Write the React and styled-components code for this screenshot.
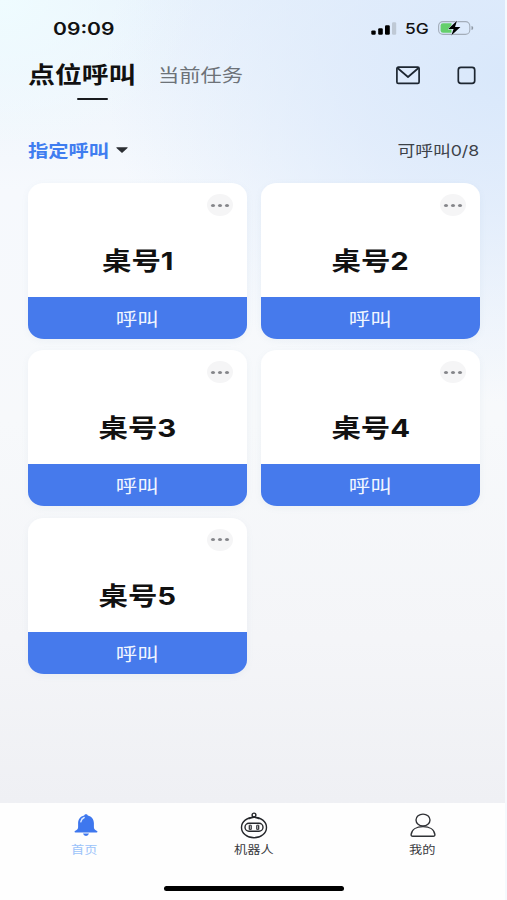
import styled, { createGlobalStyle } from "styled-components";

const GlobalStyle = createGlobalStyle`
  * {
    box-sizing: border-box;
  }

  body {
    margin: 0;
    font-family: "Inter", "Noto Sans CJK SC", sans-serif;
  }
`;

const Screen = styled.div`
  display: flex;
  flex-direction: column;
  width: 507px;
  height: 900px;
  overflow: hidden;
  border-right: 2px solid #f5f9fd;
  background:
    radial-gradient(ellipse 400px 330px at 100% 8%, #d9e8fb 0%, rgba(220, 233, 251, 0.75) 40%, rgba(232, 241, 252, 0) 100%),
    radial-gradient(ellipse 200px 150px at 0% 0%, #effcff 0%, rgba(241, 252, 255, 0) 100%),
    linear-gradient(180deg, #eaf3fc 0px, #f6f9fd 190px, #f7f9fb 420px, #f4f5f8 640px, #eff0f4 803px);
`;

/* wide lettering: every label is stretched sideways from its own edge */
const Label = styled.span`
  display: inline-block;
  white-space: nowrap;
  line-height: 1;
  font-size: ${({ $size }) => $size}px;
  font-weight: ${({ $weight }) => $weight || 400};
  color: ${({ $color }) => $color || "#111"};
  transform: scaleX(${({ $stretch }) => $stretch || 1.18});
  transform-origin: ${({ $origin }) => $origin || "center"};
`;

const StatusBar = styled.div`
  display: flex;
  align-items: center;
  justify-content: space-between;
  height: 57px;
  padding: 1px 31px 0 53px;
`;

const StatusIcons = styled.div`
  display: flex;
  align-items: center;
  margin-top: -2px;
`;

const NetworkLabel = styled.div`
  display: flex;
  width: 24px;
  margin: 1px 8px 0 8px;
`;

const Header = styled.div`
  display: flex;
  align-items: center;
  height: 36px;
  padding: 0 29px 0 28px;
`;

const Tab = styled.div`
  position: relative;
  display: flex;
  width: ${({ $width }) => $width}px;
  padding-top: ${({ $drop }) => $drop || 0}px;
`;

const TabLine = styled.div`
  position: absolute;
  left: 49px;
  top: 34px;
  width: 31px;
  height: 2px;
  border-radius: 1px;
  background: #191b1e;
`;

const HeaderIcons = styled.div`
  display: flex;
  align-items: center;
  gap: 36px;
  margin-left: auto;
`;

const FilterRow = styled.div`
  display: flex;
  align-items: center;
  height: 30px;
  margin-top: 42px;
  padding: 0 26px 0 28px;
`;

const FilterName = styled.div`
  display: flex;
  width: 88px;
  padding-top: 1px;
`;

const Count = styled.div`
  display: flex;
  margin-left: auto;
`;

const CardGrid = styled.div`
  display: grid;
  grid-template-columns: 219px 219px;
  grid-auto-rows: 156px;
  column-gap: 14px;
  row-gap: 11.4px;
  padding: 18px 0 0 28px;
`;

const Card = styled.div`
  display: flex;
  flex-direction: column;
  overflow: hidden;
  border-radius: 16px / 14px;
  background: #fff;
  box-shadow: 0 2px 7px rgba(120, 140, 170, 0.07);
`;

const CardBody = styled.div`
  position: relative;
  display: flex;
  align-items: center;
  justify-content: center;
  height: 114px;
  padding-top: 42px;
`;

const MoreButton = styled.div`
  position: absolute;
  top: 11px;
  right: 14px;
  display: flex;
  align-items: center;
  justify-content: center;
  gap: 3px;
  width: 26px;
  height: 22px;
  border-radius: 50%;
  background: #f5f5f6;
`;

const Dot = styled.span`
  width: 4px;
  height: 3px;
  border-radius: 50%;
  background: #85868a;
`;

const CallButton = styled.div`
  display: flex;
  flex: 1;
  align-items: center;
  justify-content: center;
  padding-top: 2px;
  background: #467aec;
`;

const BottomBar = styled.div`
  height: 97px;
  margin-top: auto;
  background: #fefefe;
`;

const NavList = styled.div`
  display: grid;
  grid-template-columns: 1fr 1fr 1fr;
  width: 507px;
  height: 83px;
  padding-top: 9px;
`;

const NavItem = styled.div`
  display: flex;
  flex-direction: column;
  align-items: center;
  gap: 7px;
`;

const HomeIndicator = styled.div`
  width: 180px;
  height: 5px;
  margin-left: 164px;
  border-radius: 3px;
  background: #000;
`;

const SignalIcon = () => (
  <svg width="26" height="13" viewBox="0 0 26 13">
    <rect x="0.3" y="8.4" width="4.4" height="4.4" rx="1.2" fill="#000" />
    <rect x="7.2" y="6.2" width="4.6" height="6.6" rx="1.2" fill="#000" />
    <rect x="14" y="3.2" width="4.8" height="9.6" rx="1.2" fill="#000" />
    <rect x="21" y="0.2" width="4.2" height="12.6" rx="1.2" fill="#bfc9d5" />
  </svg>
);

const BatteryIcon = () => (
  <svg width="37" height="16" viewBox="0 0 37 16">
    <rect x="1.6" y="1.6" width="31.2" height="12.8" rx="4.4" fill="none" stroke="#a3adb9" strokeWidth="1.1" />
    <path d="M6 3.2h8.500v9.600H6a2.400 2.400 0 0 1-2.400-2.400V5.600A2.400 2.400 0 0 1 6 3.200z" fill="#65cf6c" />
    <path d="M34.500 6v4c1.200-.3 1.700-1.100 1.700-2s-.5-1.700-1.700-2z" fill="#8f99a5" />
    <path d="M20 .8 11.200 9h5.400l-2.300 6.400L23.400 7H18z" fill="#000" stroke="#dce9fa" strokeWidth="1" paintOrder="stroke" />
  </svg>
);

const MailIcon = () => (
  <svg width="25" height="19" viewBox="0 0 25 19" fill="none" stroke="#1d2631" strokeWidth="1.700">
    <rect x="0.900" y="1.200" width="22.200" height="16.200" rx="1.400" />
    <path d="m1.500 2 10.500 9L22.500 2" strokeLinejoin="round" />
  </svg>
);

const SquareIcon = () => (
  <svg width="19" height="19" viewBox="0 0 19 19" fill="none">
    <rect x="1.300" y="1.400" width="16.400" height="16" rx="2.600" stroke="#1d2631" strokeWidth="1.700" />
  </svg>
);

const CaretIcon = () => (
  <svg width="12" height="7" viewBox="0 0 12 7">
    <path d="M.7.3h10.600q.7 0 .2.600L6.600 5.600q-.6.500-1.200 0L.5.900Q0 .3.700.3z" fill="#2b2e33" />
  </svg>
);

const BellIcon = () => (
  <svg width="26" height="26" viewBox="0 0 26 26">
    <path
      d="M14 2.200c.9 0 1.500.5 1.800 1.200 3.900.9 6.100 3.700 6.100 7.600v4.200c0 1.800 1.300 2.800 3.100 3.700.8.400.6 1.500-.4 1.500H3.400c-1 0-1.200-1.100-.4-1.500 1.800-.9 3.100-1.900 3.100-3.700V11c0-3.900 2.200-6.700 6.100-7.600.3-.7.900-1.200 1.800-1.200z"
      fill="#3e77ee"
    />
    <path d="M11 21.600h6q-.6 2.400-3 2.400t-3-2.400z" fill="#3e77ee" />
    <path d="M8.800 9.800q.6-3.200 3.400-4.300" fill="none" stroke="#dbe8ff" strokeWidth="1.400" strokeLinecap="round" />
  </svg>
);

const RobotIcon = () => (
  <svg width="28" height="28" viewBox="0 0 28 28" fill="none" stroke="#25272b" strokeWidth="1.400">
    <circle cx="14" cy="3" r="1.900" />
    <path d="M8.400 6.800q5.600-3.200 11.200 0" />
    <ellipse cx="14" cy="15.400" rx="12.500" ry="10.300" />
    <rect x="5" y="11.300" width="18" height="8" rx="4" />
    <path d="M9.300 13.200v4.200M11.200 13.200v4.200M16.800 13.200v4.200M18.700 13.200v4.200" strokeWidth="1.200" />
    <path d="M9.300 13.200h1.900M9.300 17.400h1.900M16.800 13.200h1.900M16.800 17.400h1.900" strokeWidth="0.900" />
  </svg>
);

const UserIcon = () => (
  <svg width="26" height="26" viewBox="0 0 26 26" fill="none" stroke="#303236" strokeWidth="1.400">
    <ellipse cx="13" cy="8" rx="7" ry="5.900" />
    <path d="M2.700 24.200q-1.700 0-1.600-1.600c.5-5 5.300-8 11.900-8s11.400 3 11.900 8q.1 1.600-1.600 1.600z" />
  </svg>
);

const tables = ["桌号1", "桌号2", "桌号3", "桌号4", "桌号5"];

const navItems = [
  { name: "首页", icon: <BellIcon />, color: "#9cc3fa" },
  { name: "机器人", icon: <RobotIcon />, color: "#3a3b3e" },
  { name: "我的", icon: <UserIcon />, color: "#3a3b3e" },
];

const NavIcon = styled.div`
  display: flex;
  align-items: flex-start;
  height: 26px;
`;

const App = () => {
  return (
    <>
      <GlobalStyle />
      <Screen>
        <StatusBar>
          <Label $size={17} $weight={600} $stretch={1.24} $origin="left">
            09:09
          </Label>
          <StatusIcons>
            <SignalIcon />
            <NetworkLabel>
              <Label $size={15} $weight={500} $stretch={1.16} $origin="left">
                5G
              </Label>
            </NetworkLabel>
            <BatteryIcon />
          </StatusIcons>
        </StatusBar>
        <Header>
          <Tab $width={130}>
            <Label $size={22.8} $weight={700} $origin="left">
              点位呼叫
            </Label>
            <TabLine />
          </Tab>
          <Tab $width={90} $drop={2}>
            <Label $size={18} $color="#6d7278" $origin="left">
              当前任务
            </Label>
          </Tab>
          <HeaderIcons>
            <MailIcon />
            <SquareIcon />
          </HeaderIcons>
        </Header>
        <FilterRow>
          <FilterName>
            <Label $size={17.2} $weight={700} $color="#3f7df0" $origin="left">
              指定呼叫
            </Label>
          </FilterName>
          <CaretIcon />
          <Count>
            <Label $size={15} $color="#3c4148" $origin="right">
              可呼叫0/8
            </Label>
          </Count>
        </FilterRow>
        <CardGrid>
          {tables.map((table) => (
            <Card key={table}>
              <CardBody>
                <MoreButton>
                  <Dot />
                  <Dot />
                  <Dot />
                </MoreButton>
                <Label $size={24.5} $weight={700} $stretch={1.2}>
                  {table}
                </Label>
              </CardBody>
              <CallButton>
                <Label $size={18.2} $color="#f1f6ff">
                  呼叫
                </Label>
              </CallButton>
            </Card>
          ))}
        </CardGrid>
        <BottomBar>
          <NavList>
            {navItems.map((item) => (
              <NavItem key={item.name}>
                <NavIcon>{item.icon}</NavIcon>
                <Label $size={11.2} $color={item.color}>
                  {item.name}
                </Label>
              </NavItem>
            ))}
          </NavList>
          <HomeIndicator />
        </BottomBar>
      </Screen>
    </>
  );
};

export default App;
